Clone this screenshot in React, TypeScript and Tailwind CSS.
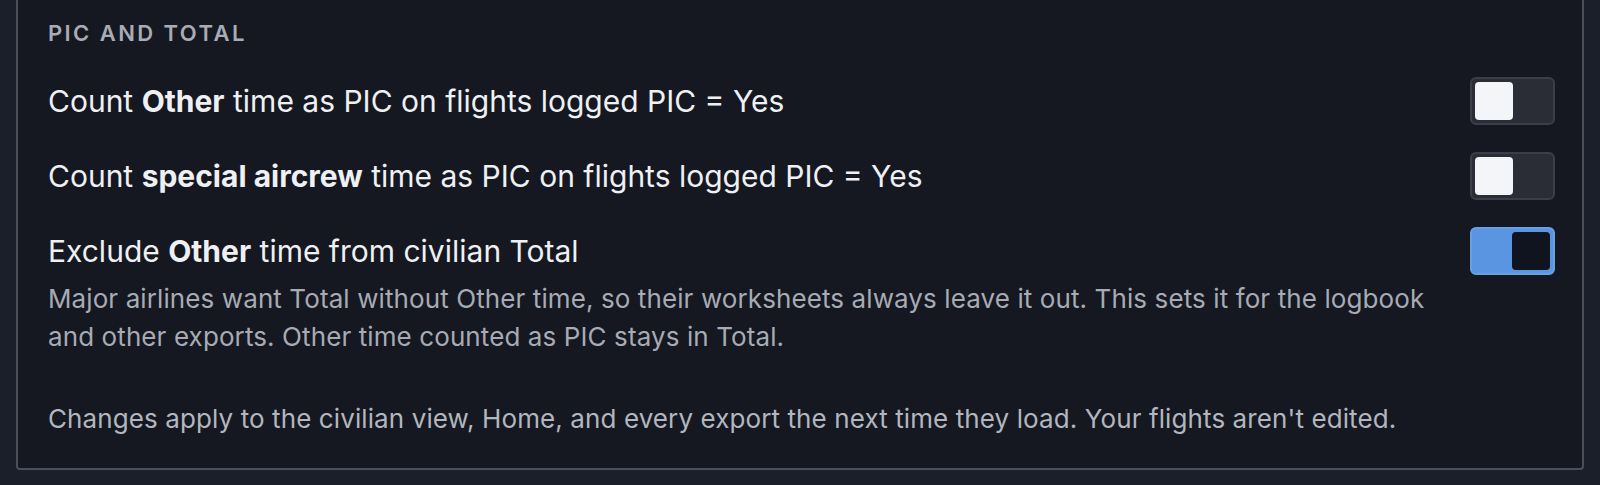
import { useState } from "react";

type ToggleProps = {
  on: boolean;
  onChange: (v: boolean) => void;
};

function Toggle({ on, onChange }: ToggleProps) {
  return (
    <button
      type="button"
      role="switch"
      aria-checked={on}
      onClick={() => onChange(!on)}
      className={
        on
          ? "flex h-[48px] w-[85px] shrink-0 items-center justify-end rounded-[6px] border-2 border-[#68a0e6] bg-[#5a95e1] p-[3px]"
          : "flex h-[48px] w-[85px] shrink-0 items-center justify-start rounded-[6px] border-2 border-[#3b3e48] bg-[#2a2d36] p-[3px]"
      }
    >
      <span
        className={
          on
            ? "block h-[38px] w-[38px] rounded-[4px] bg-[#10141e]"
            : "block h-[38px] w-[38px] rounded-[4px] bg-[#f3f5f8]"
        }
      />
    </button>
  );
}

export default function App() {
  const [otherPic, setOtherPic] = useState(false);
  const [aircrewPic, setAircrewPic] = useState(false);
  const [excludeOther, setExcludeOther] = useState(true);

  return (
    <div
      className="min-h-screen bg-[#1b1f29] px-4"
      style={{ fontFamily: "Inter, 'Noto Sans', sans-serif" }}
    >
      <section className="rounded-b-[4px] border-2 border-t-0 border-[#4a4e59] bg-[#151820] pt-[19px] pr-[27px] pb-[30px] pl-[30px]">
        <h3 className="text-[22px] leading-[28px] font-semibold tracking-[0.11em] text-[#a8acb6] uppercase">
          PIC and Total
        </h3>

        <div className="mt-[30px] flex flex-col gap-[27px]">
          <div className="flex items-start justify-between">
            <p className="text-[30px] leading-[48px] text-[#eef0f3]">
              Count <b className="font-bold">Other</b> time as PIC on flights logged PIC = Yes
            </p>
            <Toggle on={otherPic} onChange={setOtherPic} />
          </div>

          <div className="flex items-start justify-between">
            <p className="text-[30px] leading-[48px] text-[#eef0f3]">
              Count <b className="font-bold">special aircrew</b> time as PIC on flights logged PIC = Yes
            </p>
            <Toggle on={aircrewPic} onChange={setAircrewPic} />
          </div>

          <div className="flex items-start justify-between">
            <div>
              <p className="text-[30px] leading-[48px] text-[#eef0f3]">
                Exclude <b className="font-bold">Other</b> time from civilian Total
              </p>
              <p className="mt-[5px] max-w-[1390px] text-[26px] leading-[38px] tracking-[0.1px] text-[#a6abb5]">
                Major airlines want Total without Other time, so their worksheets always leave it out. This sets it for the logbook and other exports. Other time counted as PIC stays in Total.
              </p>
            </div>
            <Toggle on={excludeOther} onChange={setExcludeOther} />
          </div>
        </div>

        <p className="mt-[44px] text-[26px] leading-[38px] tracking-[0.1px] text-[#b2b6bf]">
          Changes apply to the civilian view, Home, and every export the next time they load. Your flights aren't edited.
        </p>
      </section>
    </div>
  );
}
